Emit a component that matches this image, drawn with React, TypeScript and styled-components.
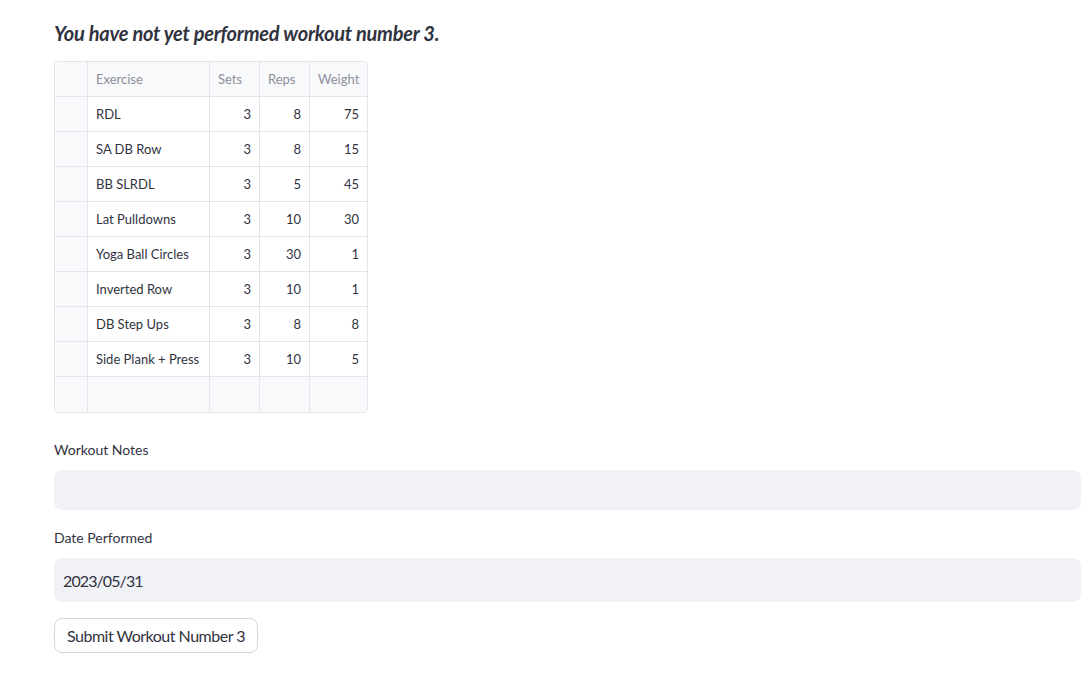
import React from "react";
import styled, { createGlobalStyle } from "styled-components";

const Global = createGlobalStyle`
  html, body { margin: 0; padding: 0; background: #ffffff; }
  body { font-family: "Source Sans Pro", "Lato", "Noto Sans", sans-serif; color: #31333f; }
`;

const Page = styled.main`
  display: flex;
  flex-direction: column;
  padding: 20px 11px 0 54px;
`;

const Heading = styled.h3`
  margin: 0;
  font-size: 20px;
  line-height: 26px;
  font-weight: 700;
  font-style: italic;
  letter-spacing: -0.25px;
  color: #31333f;
`;

const Table = styled.div`
  margin-top: 15px;
  display: grid;
  grid-template-columns: 33px 122px 50px 50px 57px;
  width: max-content;
  border: 1px solid #e4e5ea;
  border-radius: 4px;
  overflow: hidden;
  font-size: 13px;
`;

const Cell = styled.div<{ $head?: boolean; $num?: boolean; $shade?: boolean; $last?: boolean }>`
  height: 35px;
  box-sizing: border-box;
  display: flex;
  align-items: center;
  justify-content: ${(p) => (p.$num ? "flex-end" : "flex-start")};
  padding: 0 8px;
  border-right: ${(p) => (p.$last ? "none" : "1px solid #e4e5ea")};
  border-bottom: 1px solid #e4e5ea;
  background: ${(p) => (p.$head || p.$shade ? "#f8f9fb" : "#ffffff")};
  color: ${(p) => (p.$head ? "#8d8f99" : "#31333f")};
  white-space: nowrap;
`;

const EmptyCell = styled(Cell)`
  border-bottom: none;
`;

const Field = styled.div<{ $gap: number }>`
  display: flex;
  flex-direction: column;
  margin-top: ${(p) => p.$gap}px;
`;

const Label = styled.label`
  font-size: 14px;
  line-height: 20px;
  color: #31333f;
  margin-bottom: 10px;
`;

const Input = styled.div<{ $h: number }>`
  height: ${(p) => p.$h}px;
  box-sizing: border-box;
  background: #f0f2f6;
  border-radius: 8px;
  display: flex;
  align-items: center;
  padding: 0 9px;
  font-size: 16px;
  letter-spacing: -0.9px;
  color: #31333f;
`;

const Button = styled.button`
  align-self: flex-start;
  margin-top: 16px;
  height: 35px;
  box-sizing: border-box;
  padding: 0 12px;
  background: #ffffff;
  border: 1px solid #d5d6da;
  border-radius: 8px;
  font-family: inherit;
  font-size: 16px;
  letter-spacing: -0.5px;
  color: #31333f;
`;

const rows: [string, number, number, number][] = [
  ["RDL", 3, 8, 75],
  ["SA DB Row", 3, 8, 15],
  ["BB SLRDL", 3, 5, 45],
  ["Lat Pulldowns", 3, 10, 30],
  ["Yoga Ball Circles", 3, 30, 1],
  ["Inverted Row", 3, 10, 1],
  ["DB Step Ups", 3, 8, 8],
  ["Side Plank + Press", 3, 10, 5],
];

export default function App() {
  return (
    <Page>
      <Global />
      <Heading>You have not yet performed workout number 3.</Heading>
      <Table>
        <Cell $head />
        <Cell $head>Exercise</Cell>
        <Cell $head>Sets</Cell>
        <Cell $head>Reps</Cell>
        <Cell $head $last>Weight</Cell>
        {rows.map((r) => (
          <React.Fragment key={r[0]}>
            <Cell $shade />
            <Cell>{r[0]}</Cell>
            <Cell $num>{r[1]}</Cell>
            <Cell $num>{r[2]}</Cell>
            <Cell $num $last>{r[3]}</Cell>
          </React.Fragment>
        ))}
        <EmptyCell $shade />
        <EmptyCell $shade />
        <EmptyCell $shade />
        <EmptyCell $shade />
        <EmptyCell $shade $last />
      </Table>
      <Field $gap={27}>
        <Label>Workout Notes</Label>
        <Input $h={40} />
      </Field>
      <Field $gap={18}>
        <Label>Date Performed</Label>
        <Input $h={44}>2023/05/31</Input>
      </Field>
      <Button>Submit Workout Number 3</Button>
    </Page>
  );
}
